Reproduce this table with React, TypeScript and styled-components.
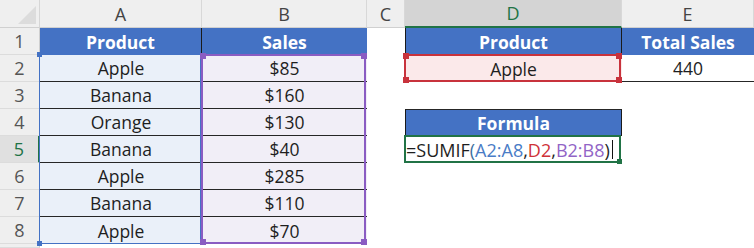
import React from 'react';
import styled, { createGlobalStyle, css } from 'styled-components';

const Global = createGlobalStyle`
  html, body { margin: 0; padding: 0; background: #ffffff; }
  body { font-family: "Open Sans", "Liberation Sans", sans-serif; }
  #root { width: 754px; height: 248px; overflow: hidden; }
`;

type At = { $r: number; $c: number };
const place = css<At>`
  grid-row: ${p => p.$r};
  grid-column: ${p => p.$c};
`;

const Sheet = styled.div`
  display: grid;
  grid-template-columns: 40px 162px 165px 38px 217px 1fr;
  grid-template-rows: 28px repeat(8, 27px) 1fr;
  width: 754px;
  height: 248px;
  overflow: hidden;
  background: #ffffff;
`;

const Corner = styled.div`
  grid-row: 1;
  grid-column: 1;
  position: relative;
  background: #efefef;
  border-right: 1px solid #d6d6d6;
  border-bottom: 1px solid #d0d0d0;
  &::after {
    content: '';
    position: absolute;
    right: 3px;
    bottom: 3px;
    width: 18px;
    height: 18px;
    background: #dcdcdc;
    clip-path: polygon(100% 0, 100% 100%, 0 100%);
  }
`;

const ColHead = styled.div<At & { $active?: boolean }>`
  ${place}
  display: flex;
  align-items: center;
  justify-content: center;
  font-size: 18px;
  color: ${p => (p.$active ? '#217346' : '#444444')};
  background: ${p => (p.$active ? '#d4d4d4' : '#efefef')};
  border-right: 1px solid #d8d8d8;
  box-sizing: border-box;
  border-bottom: ${p => (p.$active ? '2px solid #217346' : '1px solid #d0d0d0')};
`;

const RowHead = styled.div<At & { $active?: boolean }>`
  ${place}
  display: flex;
  align-items: center;
  justify-content: center;
  font-size: 18px;
  color: ${p => (p.$active ? '#217346' : '#555555')};
  background: ${p => (p.$active ? '#e0e0e0' : '#efefef')};
  border-bottom: 1px solid #dcdcdc;
  border-right: ${p => (p.$active ? '2px solid #217346' : '1px solid #cfcfcf')};
  box-sizing: border-box;
`;

type Tone = 'head' | 'blue' | 'purple' | 'pink' | 'white';

const tones: Record<Tone, string> = {
  head: '#4472c4',
  blue: '#eaf0f9',
  purple: '#f1eef7',
  pink: '#fbe9ea',
  white: '#ffffff',
};

const Cell = styled.div<At & { $tone: Tone; $line?: boolean; $divide?: boolean; $left?: boolean; $top?: boolean }>`
  ${place}
  display: flex;
  align-items: center;
  justify-content: center;
  box-sizing: border-box;
  font-size: 17.5px;
  white-space: nowrap;
  background: ${p => tones[p.$tone]};
  color: ${p => (p.$tone === 'head' ? '#ffffff' : '#1e1e1e')};
  font-weight: ${p => (p.$tone === 'head' ? 700 : 400)};
  ${p => p.$line && css`border-bottom: 1px solid #262626;`}
  ${p => p.$divide && css`border-right: 1px solid #1a1a1a;`}
  ${p => p.$left && css`border-left: 1px solid #1a1a1a;`}
  ${p => p.$top && css`border-top: 1px solid #262626;`}
`;

const Range = styled.div<{ $rows: string; $cols: string; $color: string; $w: number }>`
  grid-row: ${p => p.$rows};
  grid-column: ${p => p.$cols};
  position: relative;
  z-index: 2;
  pointer-events: none;
  border: ${p => p.$w}px solid ${p => p.$color};
  margin: -1px 1px 0 -1px;
`;

const Handle = styled.span<{ $x: 'l' | 'r'; $y: 't' | 'b'; $color: string; $size?: number }>`
  position: absolute;
  width: ${p => p.$size || 5}px;
  height: ${p => p.$size || 5}px;
  background: ${p => p.$color};
  ${p => (p.$x === 'l' ? 'left: -3px;' : 'right: -3px;')}
  ${p => (p.$y === 't' ? 'top: -3px;' : 'bottom: -3px;')}
`;

const Formula = styled.div`
  grid-row: 6;
  grid-column: 5;
  display: flex;
  align-items: center;
  padding-left: 1px;
  font-size: 18px;
  color: #1e1e1e;
  white-space: nowrap;
  z-index: 3;
`;

const Tok = styled.span<{ $c: string }>`
  color: ${p => p.$c};
`;

const Caret = styled.span`
  display: inline-block;
  width: 1px;
  height: 19px;
  margin-left: 2px;
  background: #111;
`;

const products = ['Apple', 'Banana', 'Orange', 'Banana', 'Apple', 'Banana', 'Apple'];
const sales = ['$85', '$160', '$130', '$40', '$285', '$110', '$70'];

export default function App() {
  return (
    <>
      <Global />
      <Sheet>
        <Corner />
        {['A', 'B', 'C', 'D', 'E'].map((l, i) => (
          <ColHead key={l} $r={1} $c={i + 2} $active={l === 'D'}>{l}</ColHead>
        ))}
        {[1, 2, 3, 4, 5, 6, 7, 8].map(n => (
          <RowHead key={`rh${n}`} $r={n + 1} $c={1} $active={n === 5}>{n}</RowHead>
        ))}
        <RowHead $r={10} $c={1} />

        <Cell $r={2} $c={2} $tone="head" $divide>Product</Cell>
        <Cell $r={2} $c={3} $tone="head">Sales</Cell>
        <Cell $r={2} $c={5} $tone="head" $left $divide>Product</Cell>
        <Cell $r={2} $c={6} $tone="head">Total Sales</Cell>

        {products.map((p, i) => (
          <Cell key={`a${i}`} $r={i + 3} $c={2} $tone="blue" $line={i < 6}>{p}</Cell>
        ))}
        {sales.map((s, i) => (
          <Cell key={`b${i}`} $r={i + 3} $c={3} $tone="purple" $line={i < 6}>{s}</Cell>
        ))}

        <Cell $r={3} $c={5} $tone="pink">Apple</Cell>
        <Cell $r={3} $c={6} $tone="white" $line>440</Cell>

        <Cell $r={5} $c={5} $tone="head" $left $divide $top>Formula</Cell>
        <Cell $r={6} $c={5} $tone="white" />

        <Range $rows="3 / 10" $cols="2 / 3" $color="#4472c4" $w={1}>
          <Handle $x="l" $y="t" $color="#4472c4" />
          <Handle $x="l" $y="b" $color="#4472c4" />
        </Range>
        <Range $rows="3 / 10" $cols="3 / 4" $color="#8a5cc2" $w={2}>
          <Handle $x="l" $y="t" $color="#8a5cc2" $size={6} />
          <Handle $x="r" $y="t" $color="#8a5cc2" $size={6} />
          <Handle $x="l" $y="b" $color="#8a5cc2" $size={6} />
          <Handle $x="r" $y="b" $color="#8a5cc2" $size={6} />
        </Range>
        <Range $rows="3 / 4" $cols="5 / 6" $color="#c8323c" $w={2}>
          <Handle $x="l" $y="t" $color="#c8323c" $size={6} />
          <Handle $x="r" $y="t" $color="#c8323c" $size={6} />
          <Handle $x="l" $y="b" $color="#c8323c" $size={6} />
          <Handle $x="r" $y="b" $color="#c8323c" $size={6} />
        </Range>
        <Range $rows="6 / 7" $cols="5 / 6" $color="#217346" $w={2}>
          <Handle $x="r" $y="b" $color="#217346" $size={5} />
        </Range>

        <Formula>
          <Tok $c="#1e1e1e">=SUMIF</Tok>
          <Tok $c="#3d6f9e">(</Tok>
          <Tok $c="#4a7cc6">A2:A8</Tok>
          <Tok $c="#1e1e1e">,</Tok>
          <Tok $c="#cf3238">D2</Tok>
          <Tok $c="#1e1e1e">,</Tok>
          <Tok $c="#9164c6">B2:B8</Tok>
          <Tok $c="#1e1e1e">)</Tok>
          <Caret />
        </Formula>
      </Sheet>
    </>
  );
}
